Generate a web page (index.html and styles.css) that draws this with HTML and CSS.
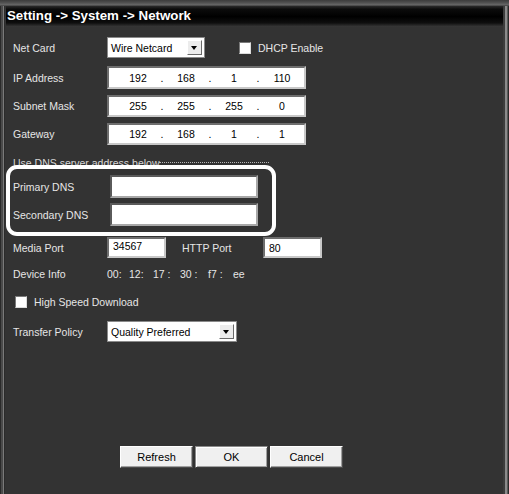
FILE: index.html
```html
<!DOCTYPE html>
<html>
<head>
<meta charset="utf-8">
<link rel="stylesheet" href="styles.css">
</head>
<body>
<div class="window">
  <div class="topstrip"></div>
  <div class="titlebar">Setting -&gt; System -&gt; Network</div>
  <div class="content">
    <div class="row r-netcard">
      <span class="label">Net Card</span>
      <div class="select sel-net"><span class="sel-text">Wire Netcard</span><span class="arrow"></span></div>
      <span class="check chk-dhcp"></span>
      <span class="clabel">DHCP Enable</span>
    </div>
    <div class="row r-ip">
      <span class="label">IP Address</span>
      <div class="input ip"><span class="seg">192</span><span class="dot">.</span><span class="seg">168</span><span class="dot">.</span><span class="seg">1</span><span class="dot">.</span><span class="seg">110</span></div>
    </div>
    <div class="row r-mask">
      <span class="label">Subnet Mask</span>
      <div class="input ip"><span class="seg">255</span><span class="dot">.</span><span class="seg">255</span><span class="dot">.</span><span class="seg">255</span><span class="dot">.</span><span class="seg">0</span></div>
    </div>
    <div class="row r-gw">
      <span class="label">Gateway</span>
      <div class="input ip"><span class="seg">192</span><span class="dot">.</span><span class="seg">168</span><span class="dot">.</span><span class="seg">1</span><span class="dot">.</span><span class="seg">1</span></div>
    </div>
    <div class="row r-caption">
      <span class="caption">Use DNS server address below</span><span class="dots"></span>
    </div>
    <div class="row r-pdns">
      <span class="label dlabel">Primary DNS</span>
      <div class="input dns"></div>
    </div>
    <div class="row r-sdns">
      <span class="label dlabel">Secondary DNS</span>
      <div class="input dns"></div>
    </div>
    <div class="row r-media">
      <span class="label">Media Port</span>
      <div class="input port top"><span>34567</span></div>
      <span class="label hlabel">HTTP Port</span>
      <div class="input port"><span>80</span></div>
    </div>
    <div class="row r-dev">
      <span class="label">Device Info</span>
      <span class="mac"><span class="m1">00:</span><span class="m2">12:</span><span class="m3">17 :</span><span class="m4">30 :</span><span class="m5">f7 :</span><span class="m6">ee</span></span>
    </div>
    <div class="row r-hsd">
      <span class="check chk-hsd"></span>
      <span class="clabel">High Speed Download</span>
    </div>
    <div class="row r-tp">
      <span class="label">Transfer Policy</span>
      <div class="select sel-tp"><span class="sel-text">Quality Preferred</span><span class="arrow"></span></div>
    </div>
    <div class="row r-buttons">
      <button class="btn">Refresh</button>
      <button class="btn btn-ok">OK</button>
      <button class="btn">Cancel</button>
    </div>
  </div>
  <div class="annot"></div>
</div>
</body>
</html>
```

FILE: styles.css
```css
html, body {
  margin: 0;
  padding: 0;
  background: #333333;
}
body {
  font-family: "Liberation Sans", Arial, sans-serif;
  font-size: 10.5px;
  color: #e6e6e6;
}
.window {
  position: relative;
  width: 509px;
  height: 494px;
  background: #333333;
  box-shadow: inset 1px 0 0 #2a2a2a, inset 3px 0 0 #4a4a4a, inset 4px 0 0 #7a7a7a, inset 5px 0 0 #2b2b2b,
              inset -1px 0 0 #2a2a2a, inset -2px 0 0 #5a5a5a, inset -4px 0 0 #8a8a8a, inset -6px 0 0 #3c3c3c;
  overflow: hidden;
}
.topstrip {
  height: 6px;
  background: linear-gradient(#3c3c3c 0, #4e4e4e 40%, #6a6a6a 85%, #2a2a2a 100%);
}
.titlebar {
  margin: 0 6px 0 6px;
  height: 21px;
  line-height: 20px;
  padding-left: 1px;
  background: linear-gradient(#2a2a2a 0, #0c0c0c 15%, #000 50%, #0e0e0e 80%, #3a3a3a 100%);
  color: #ffffff;
  font-weight: bold;
  font-size: 13.3px;
}
.content {
  padding-left: 13px;
}
.row {
  display: flex;
  align-items: center;
}
.label {
  width: 94px;
  flex: none;
  color: #e6e6e6;
}
.r-netcard { margin-top: 10px; height: 21px; }
.r-ip { margin-top: 8px; height: 23px; }
.r-mask { margin-top: 6px; height: 22px; }
.r-gw { margin-top: 6px; height: 22px; }
.r-caption { margin-top: 11px; height: 14px; }
.r-pdns { margin-top: 5px; height: 23px; }
.r-sdns { margin-top: 5px; height: 23px; }
.r-media { margin-top: 11px; height: 21px; }
.r-dev { margin-top: 9px; height: 14px; }
.r-hsd { margin-top: 15px; height: 12px; }
.r-tp { margin-top: 13px; height: 21px; }
.r-buttons { margin-top: 104px; height: 22px; padding-left: 107px; gap: 2px; }

.select {
  box-sizing: border-box;
  height: 21px;
  background: #fff;
  border: 1px solid #8a8a8a;
  display: flex;
  align-items: center;
  color: #000;
  padding-left: 3px;
  padding-right: 2px;
}
.sel-net { width: 98px; }
.sel-tp { width: 130px; }
.sel-text { flex: 1; font-size: 10.5px; }
.arrow {
  width: 15px;
  height: 15px;
  box-sizing: border-box;
  background: #ececec;
  border: 1px solid;
  border-color: #fff #6a6a6a #6a6a6a #fff;
  position: relative;
  flex: none;
}
.arrow::after {
  content: "";
  position: absolute;
  left: 3px;
  top: 5px;
  border-left: 3.5px solid transparent;
  border-right: 3.5px solid transparent;
  border-top: 4px solid #000;
}
.check {
  box-sizing: border-box;
  width: 12px;
  height: 12px;
  background: #fff;
  border: 1px solid;
  border-color: #7a7a7a #dcdcdc #dcdcdc #7a7a7a;
  flex: none;
}
.chk-dhcp { margin-left: 34px; }
.chk-hsd { margin-left: 2px; }
.clabel { margin-left: 7px; }

.input {
  box-sizing: border-box;
  background: #fff;
  border: 2px solid;
  border-color: #6e6e6e #c8c8c8 #c8c8c8 #6e6e6e;
  color: #000;
  height: 100%;
}
.ip {
  width: 199px;
  display: flex;
  align-items: center;
  padding-left: 12px;
}
.seg {
  width: 34px;
  text-align: center;
}
.dot {
  width: 14px;
  text-align: center;
}
.dlabel { width: 97px; }
.dns { width: 148px; border-color: #5a5a5a #a8a8a8 #a8a8a8 #5a5a5a; }
.port {
  width: 59px;
  display: flex;
  align-items: center;
  padding-left: 4px;
}
.port.top { align-items: flex-start; padding-top: 1px; }
.hlabel { width: 81px; margin-left: 16px; }
.caption { color: #d6d6d6; }
.dots {
  width: 110px;
  border-bottom: 1px dotted #b8b8b8;
  align-self: flex-end;
  margin-bottom: 7px;
}
.mac { display: flex; color: #e6e6e6; }
.m1 { width: 22px; }
.m2 { width: 24px; }
.m3 { width: 27px; }
.m4 { width: 28px; }
.m5 { width: 25px; }
.m6 { width: 14px; }

.btn {
  box-sizing: border-box;
  width: 73px;
  height: 22px;
  background: #f0f0f0;
  border: 1px solid;
  border-color: #ffffff #4a4a4a #4a4a4a #ffffff;
  box-shadow: inset -1px -1px 0 #a0a0a0;
  font-family: "Liberation Sans", Arial, sans-serif;
  font-size: 11px;
  color: #000;
  padding: 0;
  margin: 0;
}
.btn-ok {
  border-color: #8a8a8a #3a3a3a #3a3a3a #8a8a8a;
  box-shadow: inset 1px 1px 0 #fff, inset -1px -1px 0 #a0a0a0;
}
.annot {
  position: absolute;
  left: 6px;
  top: 165px;
  width: 270px;
  height: 71px;
  box-sizing: border-box;
  border: 4px solid #ffffff;
  border-radius: 11px;
}
```
